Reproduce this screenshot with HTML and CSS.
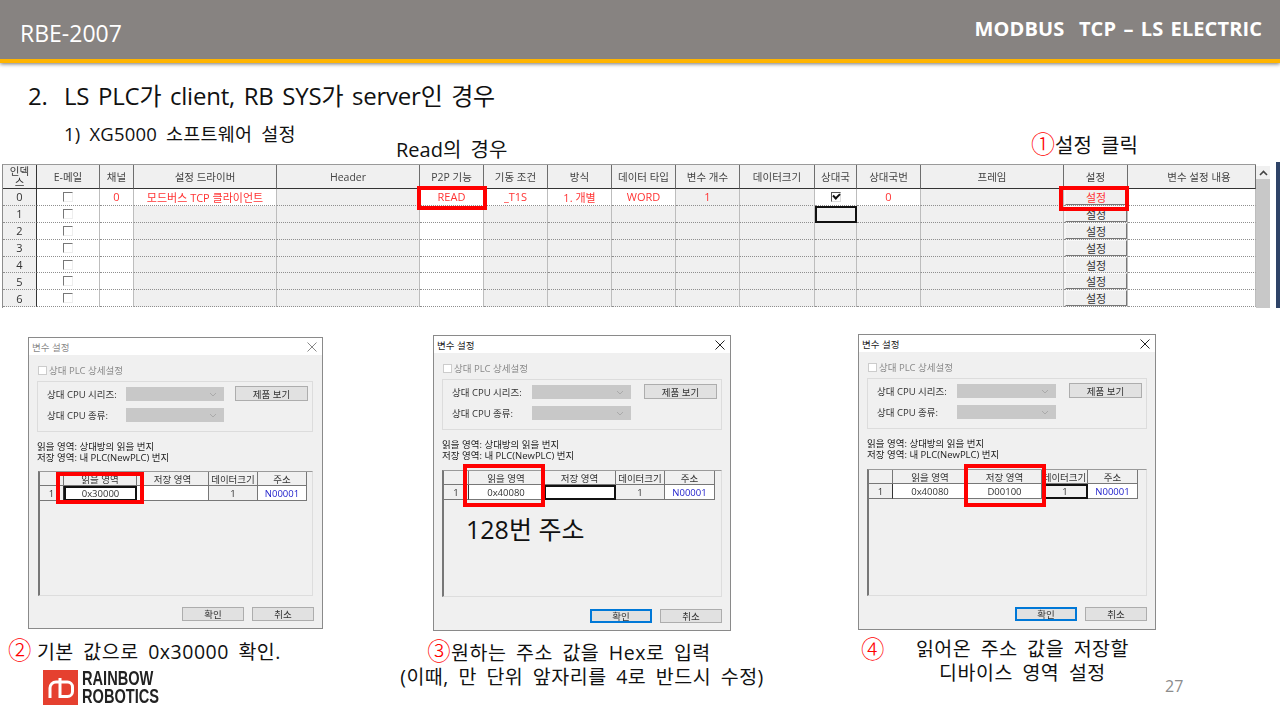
FILE: index.html
```html
<!DOCTYPE html>
<html lang="ko">
<head>
<meta charset="utf-8">
<title>RBE-2007</title>
<link rel="stylesheet" href="styles.css">
</head>
<body>
<div class="slide">
  <header class="topbar">
    <span class="doc-id">RBE-2007</span>
    <span class="doc-title">MODBUS&nbsp; TCP – LS ELECTRIC</span>
  </header>
  <section class="intro">
    <h1 class="heading"><span class="heading-num">2.</span>LS PLC가 client, RB SYS가 server인 경우</h1>
    <p class="subheading">1) XG5000 소프트웨어 설정</p>
    <span class="note note-read">Read의 경우</span>
    <span class="note note-click"><span class="circled">①</span>설정 클릭</span>
  </section>

  <section class="sheet">
    <div class="sheet-table">
      <div class="row head">
        <div class="c idx">인덱스</div><div class="c">E-메일</div><div class="c">채널</div><div class="c">설정 드라이버</div><div class="c">Header</div><div class="c">P2P 기능</div><div class="c">기동 조건</div><div class="c">방식</div><div class="c">데이터 타입</div><div class="c">변수 개수</div><div class="c">데이터크기</div><div class="c">상대국</div><div class="c">상대국번</div><div class="c">프레임</div><div class="c">설정</div><div class="c last">변수 설정 내용</div>
      </div>
      <div class="row red">
        <div class="c idx">0</div><div class="c w"><i class="cb"></i></div><div class="c w">0</div><div class="c w">모드버스 TCP 클라이언트</div><div class="c"></div><div class="c w">READ</div><div class="c w">_T1S</div><div class="c w">1. 개별</div><div class="c w">WORD</div><div class="c">1</div><div class="c"></div><div class="c w"><i class="cb on"></i></div><div class="c w">0</div><div class="c"></div><div class="c btn-c"><span class="mini-btn">설정</span></div><div class="c w"></div>
      </div>
      <div class="row">
        <div class="c idx">1</div><div class="c w"><i class="cb"></i></div><div class="c w"></div><div class="c"></div><div class="c"></div><div class="c w"></div><div class="c"></div><div class="c"></div><div class="c"></div><div class="c"></div><div class="c"></div><div class="c cur"></div><div class="c"></div><div class="c"></div><div class="c btn-c"><span class="mini-btn">설정</span></div><div class="c w"></div>
      </div>
      <div class="row">
        <div class="c idx">2</div><div class="c w"><i class="cb"></i></div><div class="c w"></div><div class="c"></div><div class="c"></div><div class="c w"></div><div class="c"></div><div class="c"></div><div class="c"></div><div class="c"></div><div class="c"></div><div class="c"></div><div class="c"></div><div class="c"></div><div class="c btn-c"><span class="mini-btn">설정</span></div><div class="c w"></div>
      </div>
      <div class="row">
        <div class="c idx">3</div><div class="c w"><i class="cb"></i></div><div class="c w"></div><div class="c"></div><div class="c"></div><div class="c w"></div><div class="c"></div><div class="c"></div><div class="c"></div><div class="c"></div><div class="c"></div><div class="c"></div><div class="c"></div><div class="c"></div><div class="c btn-c"><span class="mini-btn">설정</span></div><div class="c w"></div>
      </div>
      <div class="row">
        <div class="c idx">4</div><div class="c w"><i class="cb"></i></div><div class="c w"></div><div class="c"></div><div class="c"></div><div class="c w"></div><div class="c"></div><div class="c"></div><div class="c"></div><div class="c"></div><div class="c"></div><div class="c"></div><div class="c"></div><div class="c"></div><div class="c btn-c"><span class="mini-btn">설정</span></div><div class="c w"></div>
      </div>
      <div class="row">
        <div class="c idx">5</div><div class="c w"><i class="cb"></i></div><div class="c w"></div><div class="c"></div><div class="c"></div><div class="c w"></div><div class="c"></div><div class="c"></div><div class="c"></div><div class="c"></div><div class="c"></div><div class="c"></div><div class="c"></div><div class="c"></div><div class="c btn-c"><span class="mini-btn">설정</span></div><div class="c w"></div>
      </div>
      <div class="row">
        <div class="c idx">6</div><div class="c w"><i class="cb"></i></div><div class="c w"></div><div class="c"></div><div class="c"></div><div class="c w"></div><div class="c"></div><div class="c"></div><div class="c"></div><div class="c"></div><div class="c"></div><div class="c"></div><div class="c"></div><div class="c"></div><div class="c btn-c"><span class="mini-btn">설정</span></div><div class="c w"></div>
      </div>
    </div>
    <div class="scroll"><div class="scroll-up"><svg width="9" height="6" viewBox="0 0 9 6"><path d="M1 5 4.500 1.500 8 5" fill="none" stroke="#444" stroke-width="1.600"/></svg></div><div class="scroll-thumb"></div></div>
    <div class="edge"></div>
    <span class="mark mark-read"></span>
    <span class="mark mark-set"></span>
  </section>

  <section class="steps">
    <article class="step step-a">
      <div class="dialog inactive">
        <div class="dlg-title"><span>변수 설정</span><svg class="x" width="10" height="10" viewBox="0 0 10 10"><path d="M.5.500l9 9M9.500.500l-9 9" stroke="currentColor" fill="none"/></svg></div>
        <div class="dlg-body">
          <div class="dlg-check"><i class="cb2"></i>상대 PLC 상세설정</div>
          <div class="dlg-group">
            <div class="dlg-fields">
              <div class="field"><label>상대 CPU 시리즈:</label><span class="sel"><svg width="8" height="5" viewBox="0 0 8 5"><path d="M1 1l3 3 3-3" stroke="#aaa" fill="none"/></svg></span></div>
              <div class="field"><label>상대 CPU 종류:</label><span class="sel"><svg width="8" height="5" viewBox="0 0 8 5"><path d="M1 1l3 3 3-3" stroke="#aaa" fill="none"/></svg></span></div>
            </div>
            <span class="dlg-btn view">제품 보기</span>
          </div>
          <p class="dlg-text">읽을 영역: 상대방의 읽을 번지<br>저장 영역: 내 PLC(NewPLC) 번지</p>
          <div class="dlg-grid">
            <div class="g-row g-head"><div class="g"></div><div class="g">읽을 영역</div><div class="g">저장 영역</div><div class="g">데이터크기</div><div class="g">주소</div></div>
            <div class="g-row"><div class="g gh">1</div><div class="g gw cur2">0x30000</div><div class="g gw"></div><div class="g">1</div><div class="g gw blue">N00001</div></div>
          </div>
          <div class="dlg-actions"><span class="dlg-btn">확인</span><span class="dlg-btn">취소</span></div>
        </div>
        <span class="mark mark-a"></span>
      </div>
      <p class="caption cap-a"><span class="circled">②</span><span class="cap-text">기본 값으로 0x30000 확인.</span></p>
    </article>

    <article class="step step-b">
      <div class="dialog">
        <div class="dlg-title"><span>변수 설정</span><svg class="x" width="10" height="10" viewBox="0 0 10 10"><path d="M.5.500l9 9M9.500.500l-9 9" stroke="currentColor" fill="none"/></svg></div>
        <div class="dlg-body">
          <div class="dlg-check"><i class="cb2"></i>상대 PLC 상세설정</div>
          <div class="dlg-group">
            <div class="dlg-fields">
              <div class="field"><label>상대 CPU 시리즈:</label><span class="sel"><svg width="8" height="5" viewBox="0 0 8 5"><path d="M1 1l3 3 3-3" stroke="#aaa" fill="none"/></svg></span></div>
              <div class="field"><label>상대 CPU 종류:</label><span class="sel"><svg width="8" height="5" viewBox="0 0 8 5"><path d="M1 1l3 3 3-3" stroke="#aaa" fill="none"/></svg></span></div>
            </div>
            <span class="dlg-btn view">제품 보기</span>
          </div>
          <p class="dlg-text">읽을 영역: 상대방의 읽을 번지<br>저장 영역: 내 PLC(NewPLC) 번지</p>
          <div class="dlg-grid">
            <div class="g-row g-head"><div class="g"></div><div class="g">읽을 영역</div><div class="g">저장 영역</div><div class="g">데이터크기</div><div class="g">주소</div></div>
            <div class="g-row"><div class="g gh">1</div><div class="g gw">0x40080</div><div class="g gw cur2"></div><div class="g">1</div><div class="g gw blue">N00001</div></div>
          </div>
          <div class="dlg-actions"><span class="dlg-btn focus">확인</span><span class="dlg-btn">취소</span></div>
        </div>
        <span class="mark mark-b"></span>
        <span class="addr-note">128번 주소</span>
      </div>
      <div class="caption cap-b"><p class="cap-first"><span class="circled">③</span>원하는 주소 값을 Hex로 입력</p><p>(이때, 만 단위 앞자리를 4로 반드시 수정)</p></div>
    </article>

    <article class="step step-c">
      <div class="dialog">
        <div class="dlg-title"><span>변수 설정</span><svg class="x" width="10" height="10" viewBox="0 0 10 10"><path d="M.5.500l9 9M9.500.500l-9 9" stroke="currentColor" fill="none"/></svg></div>
        <div class="dlg-body">
          <div class="dlg-check"><i class="cb2"></i>상대 PLC 상세설정</div>
          <div class="dlg-group">
            <div class="dlg-fields">
              <div class="field"><label>상대 CPU 시리즈:</label><span class="sel"><svg width="8" height="5" viewBox="0 0 8 5"><path d="M1 1l3 3 3-3" stroke="#aaa" fill="none"/></svg></span></div>
              <div class="field"><label>상대 CPU 종류:</label><span class="sel"><svg width="8" height="5" viewBox="0 0 8 5"><path d="M1 1l3 3 3-3" stroke="#aaa" fill="none"/></svg></span></div>
            </div>
            <span class="dlg-btn view">제품 보기</span>
          </div>
          <p class="dlg-text">읽을 영역: 상대방의 읽을 번지<br>저장 영역: 내 PLC(NewPLC) 번지</p>
          <div class="dlg-grid">
            <div class="g-row g-head"><div class="g"></div><div class="g">읽을 영역</div><div class="g">저장 영역</div><div class="g">데이터크기</div><div class="g">주소</div></div>
            <div class="g-row"><div class="g gh">1</div><div class="g gw">0x40080</div><div class="g gw">D00100</div><div class="g cur2">1</div><div class="g gw blue">N00001</div></div>
          </div>
          <div class="dlg-actions"><span class="dlg-btn focus">확인</span><span class="dlg-btn">취소</span></div>
        </div>
        <span class="mark mark-c"></span>
      </div>
      <div class="caption cap-c"><span class="circled">④</span><p>읽어온 주소 값을 저장할<br>디바이스 영역 설정</p></div>
    </article>
  </section>

  <div class="logo">
    <svg class="logo-mark" width="35" height="35" viewBox="0 0 35 35"><rect width="35" height="35" fill="#e5402f"/><path d="M7 28V18a6 6 0 0 1 6-6h4M17 8V26.500h7.500a5 5 0 0 0 5-5V17a5 5 0 0 0-5-5H17" fill="none" stroke="#fff" stroke-width="3"/></svg>
    <div class="logo-text">RAINBOW<br>ROBOTICS</div>
  </div>
  <span class="page-no">27</span>
</div>
</body>
</html>
```

FILE: styles.css
```css
* { box-sizing: border-box; }
html, body { margin: 0; padding: 0; background: #fff; }
body { font-family: "Open Sans", "Noto Sans CJK KR", sans-serif; color: #111; }
p, h1 { margin: 0; font-weight: 400; }
i { font-style: normal; }

.slide { position: relative; width: 1280px; height: 720px; overflow: hidden; background: #fff; }

.topbar {
  height: 63px;
  padding: 0 18px 0 20px;
  display: flex;
  justify-content: space-between;
  align-items: center;
  background: #878381;
  border-bottom: 4px solid #ffb400;
  box-shadow: 0 1px 4px rgba(0,0,0,.55);
  color: #fff;
}
.doc-id { font-size: 23px; position: relative; top: 3px; }
.doc-title { font-size: 20px; font-weight: 700; word-spacing: 2px; letter-spacing: .1px; position: relative; top: -1px; }

.intro { position: relative; height: 101px; padding: 18px 0 0 28px; }
.heading { font-size: 24px; line-height: 30px; letter-spacing: -.2px; word-spacing: 2.600px; display: flex; }
.heading-num { width: 36px; }
.subheading { font-size: 18.500px; line-height: 24px; margin: 11px 0 0 36px; letter-spacing: .2px; word-spacing: 4px; }
.note { position: absolute; font-size: 20px; line-height: 26px; white-space: nowrap; word-spacing: 4px; }
.note-read { left: 396px; top: 74px; }
.note-click { left: 1031px; top: 69px; }
.circled { color: #f00; font-size: 1.200em; line-height: 24px; font-weight: 300; }

/* main spreadsheet */
.sheet { position: relative; display: flex; height: 144px; padding-left: 2px; filter: blur(.25px); }
.sheet-table { width: 1254px; border-top: 1px solid #9a9a9a; border-left: 1px solid #8d8d8d; }
.row {
  display: grid;
  grid-template-columns: 34px 63px 34px 143px 143px 64px 64px 64px 64px 64px 75px 42px 64px 143px 64px 128px;
  height: 16.900px;
  font-size: 11px;
  color: #333;
}
.row.head { height: 24px; font-size: 10.500px; }
.c {
  display: flex;
  align-items: center;
  justify-content: center;
  background: #f0f0f0;
  border-right: 1px solid #bdbdbd;
  border-bottom: 1px dotted #8f8f8f;
  overflow: hidden;
  white-space: nowrap;
}
.c.w { background: #fff; }
.head .c { border-right: 1px solid #6d6d6d; border-bottom: 1px solid #333; background: #f0f0f0; color: #444; }
.head .c.idx { white-space: normal; text-align: center; line-height: 11px; padding: 0 5px; word-break: break-all; }
.head .c.last { padding-left: 15px; }
.c.idx { border-right: 1px solid #333; color: #333; }
.red .c { color: #f33; }
.red .c.idx { color: #333; }
.cb { display: block; width: 10px; height: 10px; background: #fff; border: 1px solid; border-color: #777 #eee #eee #777; }
.cb.on { position: relative; border-color: #555 #ddd #ddd #555; }
.cb.on::after { content: ""; position: absolute; left: 1.500px; top: 0; width: 5px; height: 3px; border-left: 2px solid #111; border-bottom: 2px solid #111; transform: rotate(-45deg); }
.cur { border: 2px solid #111; }
.btn-c { padding: 0 0 0 1px; background: #f4f4f4; }
.mini-btn {
  width: 100%;
  height: 16px;
  display: flex;
  align-items: center;
  justify-content: center;
  background: #f0f0f0;
  border: 1px solid;
  border-color: #f8f8f8 #777 #777 #f8f8f8;
  color: #333;
}
.red .mini-btn { color: #f33; }
.scroll { width: 14px; margin-top: 2px; display: flex; flex-direction: column; background: #c8c8c8; }
.scroll-up { height: 13px; background: #f0f0f0; display: flex; align-items: center; justify-content: center; }
.scroll-thumb { flex: 1; background: #c8c8c8; }
.edge { width: 4px; margin: -2px 0 0 6px; background: #2f4468; }

/* red marks over content */
.mark { position: absolute; border: 4px solid #f00; z-index: 2; }
.mark-read { left: 417px; top: 22px; width: 70px; height: 24px; }
.mark-set { left: 1059px; top: 22px; width: 70px; height: 25px; }
.mark-a { left: 27px; top: 134px; width: 88px; height: 32px; }
.mark-b { left: 29px; top: 128px; width: 82px; height: 43px; }
.mark-c { left: 105px; top: 129px; width: 82px; height: 43px; }

/* steps */
.steps { display: flex; align-items: flex-start; padding-left: 28px; }
.step { position: relative; flex: none; }
.step-a { width: 295px; margin-top: 29px; }
.step-b { width: 298px; margin: 27px 0 0 110px; }
.step-c { width: 298px; margin: 26px 0 0 127px; }

.dialog { position: relative; border: 1px solid #8a8a8a; background: #f0f0f0; height: 296px; font-size: 9.500px; color: #333; }
.step-a .dialog { height: 292px; }
.dlg-title { height: 17px; padding: 0 5px 0 3px; background: #fff; display: flex; justify-content: space-between; align-items: center; color: #222; font-size: 9.500px; }
.inactive .dlg-title { color: #8a8a8a; }
.x { color: #222; }
.inactive .x { color: #888; }
.dlg-body { filter: blur(.25px); display: flex; flex-direction: column; padding: 0 8px; }
.dlg-check { height: 26px; padding: 4px 0 0 1px; display: flex; align-items: center; gap: 2px; color: #8a8a8a; }
.cb2 { display: block; width: 9px; height: 9px; background: #fff; border: 1px solid #ccc; }
.dlg-group { height: 51px; display: flex; justify-content: space-between; padding: 5px 4px 0 9px; border: 1px solid #dcdcdc; }
.dlg-fields { display: flex; flex-direction: column; gap: 7px; }
.field { display: flex; align-items: center; height: 14px; }
.field label { width: 80px; }
.sel { width: 99px; height: 14px; background: #c8c8c8; display: flex; align-items: center; justify-content: flex-end; padding-right: 7px; }
.dlg-btn { height: 14px; display: flex; align-items: center; justify-content: center; width: 62px; background: #e1e1e1; border: 1px solid #adadad; }
.dlg-btn.view { width: 73px; height: 15px; margin-top: -1px; }
.dlg-btn.focus { border: 1px solid #0078d7; box-shadow: inset 0 0 0 1px #0078d7; }
.dlg-text { height: 40px; padding-top: 9px; line-height: 11px; font-size: 9.500px; color: #222; }
.dlg-grid { height: 127px; margin-left: 0; border-left: 2px solid #777; border-top: 1px solid #9a9a9a; border-right: 1px solid #ddd; border-bottom: 1px solid #ddd; }
.g-row { display: grid; grid-template-columns: 25px 75px 72px 49px 50px; }
.g-head { height: 14px; }
.g-row + .g-row { height: 15px; }
.g { display: flex; align-items: center; justify-content: center; border-right: 1px solid #777; border-bottom: 1px solid #777; white-space: nowrap; overflow: hidden; background: #f0f0f0; }
.gh { border-right: 1px solid #333; }
.gw { background: #fff; }
.g.cur2 { border: 2px solid #111; }
.blue { color: #22c; }
.dlg-actions { display: flex; justify-content: flex-end; gap: 8px; margin-top: 11px; }
.step-b .dlg-actions { margin-top: 12px; }

.step-a .dlg-grid .g-row { grid-template-columns: 24px 73px 72px 49px 49px; }
.step-a .dlg-text { height: 39px; }
.step-a .dlg-grid { height: 125px; margin-left: 1px; margin-right: 1px; }
.step-a .dlg-group { padding-right: 4px; margin-right: 1px; }
.step-a .sel { width: 98px; }
.step-a .field label { width: 79px; }
.step-c .dlg-grid .g-row { grid-template-columns: 24px 75px 74px 46px 50px; }

.addr-note { position: absolute; left: 32px; top: 177px; font-size: 25px; line-height: 32px; color: #111; white-space: nowrap; }

.caption { font-size: 19.500px; line-height: 24px; white-space: nowrap; color: #111; word-spacing: 4px; letter-spacing: .5px; }
.cap-a { margin: 9px 0 0 -20px; }
.cap-text { margin-left: 5px; }
.cap-b { margin: 8px -50px 0; text-align: center; }
.cap-first { margin-right: 26px; }
.cap-c { margin-top: 7px; display: flex; margin-left: 3px; }
.cap-c p { width: 268px; text-align: center; margin-left: 4px; }

.logo { position: absolute; left: 43px; top: 670px; display: flex; gap: 4px; align-items: center; }
.logo-mark { display: block; flex: none; }
.logo-text { font-family: "Liberation Sans", sans-serif; font-weight: 700; font-size: 20px; line-height: 17.500px; color: #222; transform: scaleX(.73); transform-origin: left center; }
.page-no { position: absolute; left: 1165px; top: 675px; font-size: 16px; line-height: 22px; color: #8c8c8c; }
```
